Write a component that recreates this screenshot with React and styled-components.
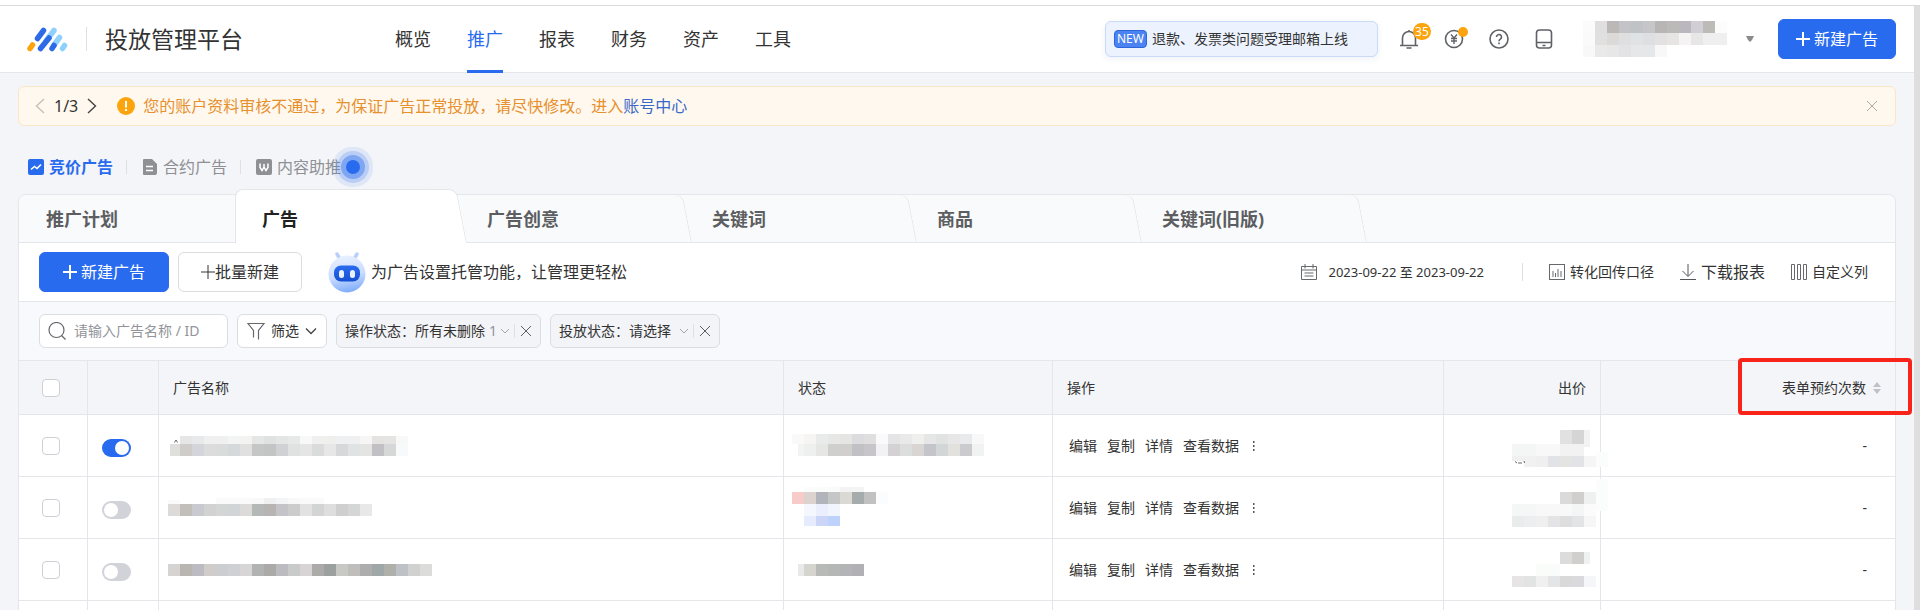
import React, { useState } from "react";
import styled, { createGlobalStyle, css } from "styled-components";

const NAV = ["概览", "推广", "报表", "财务", "资产", "工具"];

const TABS = ["推广计划", "广告", "广告创意", "关键词", "商品", "关键词(旧版)"];

const ACTIONS = ["编辑", "复制", "详情", "查看数据"];

// every strip is a run of 12px cells, "first" is the width of the leading cell when it is cut
const ACCOUNT = [
  { x: 12, y: 0, colors: "#fbfbfb #dfdfe0 #bbb8b7 #c4c3c7 #c0c3c6 #c6c5c7 #b8b5b5 #bcb9b9 #bab8be #d1cfd5 #bdbbb8 #fcfcfd" },
  { x: 12, y: 12, colors: "#fafafa #e0e0e0 #dbdad8 #dfdfdf #e0e3e5 #dddfe1 #e3e1e2 #e7e4e4 #f6f3f5 #e7e7e6 #efefef #efefef" },
  { x: 12, y: 24, colors: "#f8f8f8 #e9e9e9 #e7e7e8 #e3e3e5 #e5e7e9 #e6e7e8 #f8f8f9" },
];

const ROWS = [
  {
    id: 1,
    on: true,
    name: [
      { x: 12, y: 21, h: 8, colors: "#e6e6e6 #e8e9ea #f0f0f0 #f0f0f0 #f3f4f4 #f3f4f2 #e4e7e6 #dfe2e1 #e4e6e6 #e6e9e8 #f8f8f8 #f0f0ee #efefee #eef0f2 #f0f0f0 #f6f6f6 #e4e3e1 #e5e4e2 #f7f8f8" },
      { x: 2, y: 29, first: 10, colors: "#dfdfdd #cfccca #d3d5da #dcdcdc #dadcdb #d6d9db #e0e0e1 #c5c7c6 #c3c5c5 #cfd1d5 #dfe2e1 #e6e5e6 #dadcdb #e7e7e7 #d7d8da #dfe3e4 #e4e4e2 #c1c1c5 #d6d8d7 #f8f9fa" },
    ],
    nameMark: "M6.500 27.500L8 25L9.500 27.500",
    status: [
      { x: 0, y: 19, h: 10, colors: "#f9f9f9 #f6f5f4 #e8ebea #e7e7e7 #e5e5e3 #dcdcdf #dfdfe0 #fafafa #e4e4e7 #e9e9e9 #efefee #e6e6e7 #e0e3e2 #e7e7e7 #e9eaec #f8f8f8" },
      { x: 6, y: 29, first: 6, colors: "#f2f4f3 #eeefef #e6e6e4 #cfcfcd #d0cfce #c1c0c4 #c7c5ca #f2f2f4 #d3d1d3 #dcdedd #d8d5d2 #c4c5ca #d2d6d6 #e2e1de #cbcbcf #f0f3f2" },
    ],
    price: [
      { x: 48, y: 15, h: 17, colors: "#e1e1e1 #d5d5d5" },
      { x: 72, y: 15, h: 17, first: 6, colors: "#f2f2f2" },
      { x: 0, y: 29, colors: "#f4f5f5 #f4f5f5 #f8f8f8 #f8f8f8 #f2f2f2 #f2f2f2" },
      { x: 0, y: 41, h: 5, colors: "#f0f0f0" },
      { x: 12, y: 41, h: 11, colors: "#f1f1f2 #efefef #e2e3e6 #e4e4e3 #e2e3e6 #f5f5f6" },
      { x: 84, y: 37, h: 15, colors: "#fbfcfc" },
    ],
    priceMark: "M3 46.500L5 48M6 48H10M12 46L12.500 48",
  },
  {
    id: 2,
    on: false,
    name: [
      { x: 0, y: 23, h: 5, colors: "#fafafa" },
      { x: 48, y: 21, h: 6, colors: "#fafafa #fafafa #fafafa #f8f8f8 #f0f0f0 #f3f4f5 #f8f8f8 #fafafa #fafafa" },
      { x: 0, y: 27, colors: "#dcdbda #c2bfbb #c9cad0 #d3d2d3 #d3d6d5 #d2d5d8 #dddbd9 #b4b8b6 #b7b4b3 #c3c3c8 #cccccd #e2e2e2 #d2d5d4 #dedede #cfcfcf #d5d7d6 #e8e8e8" },
    ],
    status: [
      { x: 12, y: 10, h: 5, colors: "#fcfcfc #fafbfb #f9fafa #f3f3f3 #f3f4f3" },
      { x: 0, y: 15, colors: "#f7cbc8 #dcd3cf #b1b5bb #c4c7c6 #dad9d3 #a6abac #c1c1c1 #fbfcfe" },
      { x: 12, y: 27, colors: "#f5f7fe #ebeffd #f1f5fe" },
      { x: 12, y: 39, h: 10, colors: "#e6ebfd #cbd5f8 #bdd3fc" },
    ],
    price: [
      { x: 48, y: 15, colors: "#dadadb #d1cfce #eff1f0" },
      { x: 0, y: 27, colors: "#f5f6f6 #f5f6f6 #f8f8f8 #f8f8f8 #f8f8f8 #f4f5f5 #fbfbfb" },
      { x: 0, y: 39, h: 11, colors: "#eaebeb #eceef0 #efeff0 #e4e4e7 #dededf #e3e4e6 #f6f6f6" },
      { x: 84, y: 2, h: 32, colors: "#fbfdfd" },
    ],
  },
  {
    id: 3,
    on: false,
    name: [
      { x: 0, y: 25, colors: "#d5d4d2 #b9b6b2 #bbbbc1 #cfccca #cccdd0 #cfd0d3 #d8d5d7 #b0b3b1 #abaaa8 #bbbbc0 #c9caca #d8d3d5 #adabaa #9ca09f #c8c9c4 #bfbebc #adadae #9fa7a9 #afb0aa #bec2c7 #d1d1d1 #dcdcda" },
    ],
    status: [
      { x: 6, y: 25, first: 6, colors: "#e8e9e9 #d6d4ce #b8bab8 #b5b7b6 #b2b4b5 #b1b0b5" },
    ],
    price: [
      { x: 48, y: 13, colors: "#dcdcdd #d1cfcd" },
      { x: 72, y: 13, first: 6, colors: "#f0f2f1" },
      { x: 24, y: 25, colors: "#fafcfa #fafcfb" },
      { x: 0, y: 37, h: 11, colors: "#e6e4e4 #e2e4e3 #f0f0f1 #e3e5e6 #d9d9da #dadade #f5f6f9" },
    ],
  },
];

const Mosaic = ({ strips, width, height, mark }) => (
  <MosaicSvg width={width} height={height} aria-hidden="true">
    {strips.map(({ x, y, h = 12, first = 12, colors }) =>
      colors.split(" ").map((fill, i) => (
        <rect
          key={`${x}-${y}-${i}`}
          x={i === 0 ? x : x + first + (i - 1) * 12}
          y={y}
          width={i === 0 ? first : 12}
          height={h}
          fill={fill}
        />
      ))
    )}
    {mark && <path d={mark} fill="none" stroke="#666" />}
  </MosaicSvg>
);

const Icon = ({ size = 16, box = "0 0 16 16", stroke = "currentColor", weight = 1, children }) => (
  <svg width={size} height={size} viewBox={box} fill="none" stroke={stroke} strokeWidth={weight} aria-hidden="true">
    {children}
  </svg>
);

const Logo = () => (
  <svg width="42" height="25" viewBox="0 0 42 25" strokeWidth="5.500" strokeLinecap="round" aria-hidden="true">
    <path d="M28 3.500L20 14M33.500 10.500L28 18" stroke="#8fd0fd" />
    <path d="M17.500 3.500L11.500 11.500M23 11L14.500 21.500M28 18.500L26 21.500" stroke="#2d6ae8" />
    <path d="M38.500 18.500L36.500 21.500" stroke="#8fd0fd" />
    <path d="M6.500 18L4 21.500" stroke="#fca40d" />
  </svg>
);

const PlusIcon = ({ size = 14, weight = 2 }) => (
  <Icon size={size} box="0 0 14 14" weight={weight}>
    <path d="M7 0V14M0 7H14" />
  </Icon>
);

const Robot = () => (
  <svg width="38" height="42" viewBox="0 0 38 42" aria-hidden="true">
    <defs>
      <linearGradient id="head" x1="0.3" y1="0" x2="0.5" y2="1">
        <stop offset="0" stopColor="#eaf1ff" />
        <stop offset="0.55" stopColor="#cbdcff" />
        <stop offset="1" stopColor="#80adfc" />
      </linearGradient>
      <linearGradient id="face" x1="0" y1="0" x2="0" y2="1">
        <stop offset="0" stopColor="#2a6bf0" />
        <stop offset="1" stopColor="#1550d2" />
      </linearGradient>
    </defs>
    <path d="M9 3L12 8M29 3L26 8" stroke="#b9cffb" strokeWidth="3.500" strokeLinecap="round" />
    <circle cx="19" cy="23" r="18.500" fill="url(#head)" />
    <rect x="6" y="14.500" width="26" height="16" rx="7" fill="url(#face)" />
    <rect x="11" y="19" width="5" height="8" rx="2.500" fill="#e6f3ff" />
    <rect x="22" y="19" width="5" height="8" rx="2.500" fill="#e6f3ff" />
  </svg>
);

const ChipFilter = ({ id, label, value, count }) => (
  <Chip>
    <label htmlFor={id}>{label}：</label>
    <ChipSelect id={id}>
      <option>{value}</option>
    </ChipSelect>
    {count && <ChipCount>{count}</ChipCount>}
    <ChipArrow $gap={count ? 3 : 8}>
      <Icon size={10} box="0 0 10 10" stroke="#a4a6ab">
        <path d="M1 3L5 7L9 3" />
      </Icon>
    </ChipArrow>
    <Divider $h={14} />
    <PlainButton aria-label={`${label} ×`}>
      <Icon size={12} box="0 0 12 12" stroke="#5c5e63">
        <path d="M1 1L11 11M11 1L1 11" />
      </Icon>
    </PlainButton>
  </Chip>
);

const AdRow = ({ row }) => {
  const [checked, setChecked] = useState(false);
  const [on, setOn] = useState(row.on);

  return (
    <tr>
      <Td $center>
        <Checkbox aria-label="广告" checked={checked} onChange={() => setChecked(!checked)} />
      </Td>
      <Td $switch>
        <Switch aria-label="广告" checked={on} onChange={() => setOn(!on)} />
      </Td>
      <MosaicTd $indent={9}>
        <Mosaic strips={row.name} width={270} height={61} mark={row.nameMark} />
      </MosaicTd>
      <MosaicTd $indent={8}>
        <Mosaic strips={row.status} width={200} height={61} />
      </MosaicTd>
      <Td>
        <Actions>
          {ACTIONS.map((action) => (
            <TextLink href="#" key={action}>
              {action}
            </TextLink>
          ))}
          <PlainButton aria-label="⋮">
            <svg width="8" height="12" viewBox="0 0 8 12" fill="#55575b" aria-hidden="true">
              <path d="M4 1h1.500v2H4zM4 5h1.500v2H4zM4 9h1.500v2H4z" />
            </svg>
          </PlainButton>
        </Actions>
      </Td>
      <MosaicTd $indent={68}>
        <Mosaic strips={row.price} width={96} height={61} mark={row.priceMark} />
      </MosaicTd>
      <Td $num>-</Td>
    </tr>
  );
};

const App = () => {
  const [nav, setNav] = useState("推广");
  const [tab, setTab] = useState("广告");

  return (
    <Page>
      <GlobalStyle />
      <TopLine />
      <Frame>
        <Main>
          <Header>
            <Brand>
              <Logo />
              <Divider $h={24} />
              <h1>投放管理平台</h1>
            </Brand>
            <Nav>
              {NAV.map((item) => (
                <NavLink href="#" key={item} $active={item === nav} onClick={() => setNav(item)}>
                  {item}
                </NavLink>
              ))}
            </Nav>
            <NewsPill href="#">
              <NewTag>NEW</NewTag>
              退款、发票类问题受理邮箱上线
            </NewsPill>
            <HeaderIcons>
              <IconButton aria-label="35">
                <Icon size={20} box="0 0 20 20" stroke="#606266" weight={1.6}>
                  <path d="M1 16.500H19M3.500 16.500V9a6.500 6.500 0 0 1 13 0V16.500M10 2.500V1M7.500 19H12.500" />
                </Icon>
                <Count>35</Count>
              </IconButton>
              <IconButton aria-label="¥">
                <Icon size={20} box="0 0 20 20" stroke="#606266" weight={1.6}>
                  <circle cx="10" cy="10" r="8.500" />
                  <path d="M7 5.500L10 9L13 5.500M10 9V15M7 9.500H13M7 12H13" strokeWidth="1.400" />
                </Icon>
                <Dot />
              </IconButton>
              <IconButton aria-label="?">
                <Icon size={20} box="0 0 20 20" stroke="#606266" weight={1.6}>
                  <circle cx="10" cy="10" r="9" />
                  <path d="M7.500 8a2.500 2.500 0 1 1 3.800 2.100C10.300 10.700 10 11 10 12.200M10 13.500V15.200" />
                </Icon>
              </IconButton>
              <IconButton aria-label="App">
                <Icon size={20} box="0 0 20 20" stroke="#606266" weight={1.6}>
                  <rect x="2.500" y="1" width="15" height="18" rx="3" />
                  <path d="M2.500 13.500H17.500M8.500 16.500H11.500" />
                </Icon>
              </IconButton>
            </HeaderIcons>
            <Account>
              <Mosaic strips={ACCOUNT} width={156} height={36} />
              <svg width="8" height="6" viewBox="0 0 8 6" fill="#8b8b8b" aria-hidden="true">
                <path d="M0 0H8L6 4L4 6L2 4Z" />
              </svg>
            </Account>
            <Button $primary $pad={17}>
              <PlusIcon />
              新建广告
            </Button>
          </Header>

          <Alert>
            <PlainButton aria-label="‹">
              <Icon size={16} stroke="#c3c1bd" weight={1.4}>
                <path d="M12 1L4.500 8L12 15" />
              </Icon>
            </PlainButton>
            <Pager>1/3</Pager>
            <PlainButton aria-label="›">
              <Icon size={16} stroke="#444" weight={1.4}>
                <path d="M4 1L11.500 8L4 15" />
              </Icon>
            </PlainButton>
            <AlertIcon width="18" height="18" viewBox="0 0 18 18" aria-hidden="true">
              <circle cx="9" cy="9" r="9" fill="#fca40d" />
              <path d="M9 4V10.500M9 12V14" stroke="#fff" strokeWidth="2" />
            </AlertIcon>
            <p>
              您的账户资料审核不通过，为保证广告正常投放，请尽快修改。进入<a href="#">账号中心</a>
            </p>
            <PlainButton aria-label="×">
              <Icon size={10} box="0 0 10 10" stroke="#aaa9a4">
                <path d="M0 0L10 10M10 0L0 10" />
              </Icon>
            </PlainButton>
          </Alert>

          <SubNav>
            <SubLink href="#" $active>
              <Icon>
                <rect width="16" height="16" rx="2" fill="currentColor" stroke="none" />
                <path d="M3 10.500L6.500 7.500L9 9.500L13 5.500" stroke="#fff" strokeWidth="1.600" />
              </Icon>
              竞价广告
            </SubLink>
            <Divider $h={14} />
            <SubLink href="#">
              <Icon>
                <path d="M2 0H10L15 5V14a2 2 0 0 1-2 2H2a1 1 0 0 1-1-1V1a1 1 0 0 1 1-1Z" fill="#8e9094" stroke="none" />
                <path d="M4 7.500H11M4 11.500H11" stroke="#fff" strokeWidth="1.600" />
              </Icon>
              合约广告
            </SubLink>
            <Divider $h={14} />
            <SubLink href="#">
              <Icon>
                <rect width="16" height="16" rx="2" fill="#8e9094" stroke="none" />
                <path d="M4 4.500V8.500L6 11.500L8 8V5V8L10 11.500L12 8.500V4.500" stroke="#fff" strokeWidth="1.500" />
              </Icon>
              内容助推
              <Pulse />
            </SubLink>
          </SubNav>

          <Panel>
            <Tabs role="tablist">
              {TABS.map((item, i) => (
                <Tab
                  key={item}
                  role="tab"
                  aria-selected={item === tab}
                  $first={i === 0}
                  $active={item === tab}
                  $plain={TABS[i + 1] === tab}
                  onClick={() => setTab(item)}
                >
                  {item}
                </Tab>
              ))}
            </Tabs>

            <Toolbar>
              <Button $primary $pad={23}>
                <PlusIcon />
                新建广告
              </Button>
              <Button $pad={22}>
                <PlusIcon weight={1} />
                批量新建
              </Button>
              <Hosting href="#">
                <Robot />
                为广告设置托管功能，让管理更轻松
              </Hosting>
              <Tools>
                <ToolButton $date>
                  <Icon stroke="#66686c">
                    <path d="M0.500 2.500H15.500V15.500H0.500ZM0.500 6H15.500M4 0V4.500M12 0V4.500M3.500 9H12.500M3.500 12H12.500" />
                  </Icon>
                  2023-09-22 至 2023-09-22
                </ToolButton>
                <Divider $h={18} />
                <ToolButton>
                  <Icon stroke="#66686c">
                    <rect x="0.500" y="0.500" width="15" height="15" />
                    <path d="M4 7V13M6.500 9V13M9 5V13M12 7V13" />
                  </Icon>
                  转化回传口径
                </ToolButton>
                <ToolButton $large>
                  <Icon stroke="#55575b">
                    <path d="M8 0V12M2.500 7L8 12.500L13.500 7M0 15.500H16" />
                  </Icon>
                  下载报表
                </ToolButton>
                <ToolButton>
                  <Icon stroke="#66686c">
                    <path d="M0.500 0.500H3.500V15.500H0.500ZM6.500 0.500H9.500V15.500H6.500ZM12.500 0.500H15.500V15.500H12.500Z" />
                  </Icon>
                  自定义列
                </ToolButton>
              </Tools>
            </Toolbar>

            <Filters>
              <Search>
                <Icon size={18} box="0 0 18 18" stroke="#66686c" weight={1.2}>
                  <circle cx="8.500" cy="8" r="7.500" />
                  <path d="M13.500 13.500L17.500 17.500" />
                </Icon>
                <input aria-label="请输入广告名称 / ID" placeholder="请输入广告名称 / ID" />
              </Search>
              <FilterButton>
                <Icon size={18} box="0 0 18 18" stroke="#66686c" weight={1.2}>
                  <path d="M6.500 15.500V8.500L1 1.500H17L11.500 8.500V17.500" />
                </Icon>
                筛选
                <Icon size={12} box="0 0 12 12" stroke="#444" weight={1.3}>
                  <path d="M1 3.500L6 8.500L11 3.500" />
                </Icon>
              </FilterButton>
              <ChipFilter id="op-status" label="操作状态" value="所有未删除" count="1" />
              <ChipFilter id="serve-status" label="投放状态" value="请选择" />
            </Filters>

            <Table>
              <colgroup>
                <Col $w={69} />
                <Col $w={71} />
                <Col />
                <Col $w={269} />
                <Col $w={391} />
                <Col $w={157} />
                <Col $w={294} />
              </colgroup>
              <thead>
                <tr>
                  <Th $center>
                    <Checkbox aria-label="广告名称" />
                  </Th>
                  <Th />
                  <Th>广告名称</Th>
                  <Th>状态</Th>
                  <Th>操作</Th>
                  <Th $right>出价</Th>
                  <Th $right>
                    <SortButton>
                      表单预约次数
                      <svg width="8" height="12" viewBox="0 0 8 12" fill="#bfc1c6" aria-hidden="true">
                        <path d="M4 0L8 5H0ZM0 7H8L4 12Z" />
                      </svg>
                    </SortButton>
                    <Highlight />
                  </Th>
                </tr>
              </thead>
              <tbody>
                {ROWS.map((row) => (
                  <AdRow row={row} key={row.id} />
                ))}
                <tr>
                  <Td />
                  <Td />
                  <Td />
                  <Td />
                  <Td />
                  <Td />
                  <Td />
                </tr>
              </tbody>
            </Table>
          </Panel>
        </Main>
        <ScrollTrack />
      </Frame>
    </Page>
  );
};

const BLUE = "#296bef";
const LINE = "#e5e6ea";

const GlobalStyle = createGlobalStyle`
  * {
    box-sizing: border-box;
  }

  body {
    margin: 0;
    background: #f4f5f8;
  }

  body, button, input, select {
    font-family: "Noto Sans", "Noto Sans CJK SC", sans-serif;
    font-size: 14px;
    line-height: 20px;
    color: #333;
  }

  a {
    color: inherit;
    text-decoration: none;
  }

  button {
    cursor: pointer;
  }

  svg {
    flex: none;
  }
`;

const Page = styled.div`
  display: flex;
  flex-direction: column;
  height: 100vh;
  overflow: hidden;
`;

const TopLine = styled.div`
  flex: none;
  height: 6px;
  background: #fff;
  border-bottom: 1px solid #d9d9d9;
`;

const Frame = styled.div`
  display: flex;
  flex: 1;
  min-height: 0;
`;

const Main = styled.main`
  flex: 1;
  min-width: 0;
`;

const ScrollTrack = styled.div`
  width: 6px;
  background: #dedede;
`;

const Divider = styled.span`
  flex: none;
  width: 1px;
  height: ${({ $h }) => $h}px;
  background: #dfe0e3;
`;

const PlainButton = styled.button`
  display: flex;
  padding: 0;
  border: 0;
  background: none;
`;

/* header */

const Header = styled.header`
  display: flex;
  align-items: center;
  height: 67px;
  padding: 0 18px 0 26px;
  background: #fff;
  border-bottom: 1px solid ${LINE};
`;

const Brand = styled.div`
  display: flex;
  align-items: center;
  gap: 18px;

  h1 {
    margin: 0;
    font-size: 23px;
    line-height: 32px;
    font-weight: 400;
  }
`;

const Nav = styled.nav`
  display: flex;
  gap: 36px;
  height: 100%;
  margin-left: 152px;
`;

const NavLink = styled.a`
  display: flex;
  align-items: center;
  height: 67px;
  border-bottom: 3px solid transparent;
  padding-top: 2px;
  font-size: 18px;

  ${({ $active }) =>
    $active &&
    css`
      color: ${BLUE};
      border-color: ${BLUE};
    `}
`;

const NewsPill = styled.a`
  display: flex;
  align-items: center;
  gap: 5px;
  height: 36px;
  width: 273px;
  margin-left: auto;
  padding-left: 8px;
  border: 1px solid #c9d9f8;
  border-radius: 6px;
  background: #edf3fe;
  box-shadow: 0 2px 6px rgba(40, 80, 160, 0.08);
`;

const NewTag = styled.span`
  padding: 0 2px;
  border: 1px solid #2c66d8;
  border-radius: 4px;
  background: #4b84f2;
  color: #fff;
  font-size: 12px;
  line-height: 16px;
`;

const HeaderIcons = styled.div`
  display: flex;
  gap: 25px;
  margin-left: 21px;
`;

const IconButton = styled(PlainButton)`
  position: relative;
`;

const Count = styled.span`
  position: absolute;
  left: 14px;
  top: -6px;
  width: 18px;
  border-radius: 9px;
  background: #fca40d;
  color: #fff;
  font-size: 12px;
  line-height: 17px;
`;

const Dot = styled.span`
  position: absolute;
  right: -4px;
  top: -2px;
  width: 10px;
  height: 10px;
  border-radius: 50%;
  background: #fca40d;
`;

const Account = styled(PlainButton)`
  align-items: center;
  gap: 19px;
  margin: 0 24px 0 17px;
`;

const Button = styled.button`
  display: flex;
  align-items: center;
  justify-content: center;
  gap: ${({ $primary }) => ($primary ? 4 : 0)}px;
  height: 40px;
  padding: 0 ${({ $pad }) => $pad}px;
  border: 1px solid ${({ $primary }) => ($primary ? BLUE : "#dcdde1")};
  border-radius: 6px;
  background: ${({ $primary }) => ($primary ? BLUE : "#fff")};
  color: ${({ $primary }) => ($primary ? "#fff" : "#333")};
  font-size: 16px;
  white-space: nowrap;
`;

/* alert */

const Alert = styled.section`
  display: flex;
  align-items: center;
  height: 40px;
  margin: 13px 18px 0;
  padding: 0 18px 0 13px;
  border: 1px solid #fae6c4;
  border-radius: 6px;
  background: #fff8ee;

  p {
    flex: 1;
    margin: 0;
    font-size: 16px;
    color: #e6902e;
  }

  a {
    color: #3a68c8;
  }
`;

const Pager = styled.span`
  padding: 0 6px;
  font-size: 16px;
`;

const AlertIcon = styled.svg`
  margin: 0 8px 0 17px;
`;

/* sub navigation */

const SubNav = styled.nav`
  display: flex;
  align-items: center;
  gap: 13px;
  height: 68px;
  padding: 14px 28px 0;

  ${Divider} {
    margin-right: 2px;
  }
`;

const SubLink = styled.a`
  position: relative;
  display: flex;
  align-items: center;
  gap: 5px;
  font-size: 16px;
  color: ${({ $active }) => ($active ? BLUE : "#8e9094")};
  font-weight: ${({ $active }) => ($active ? 700 : 400)};
`;

const Pulse = styled.span`
  position: absolute;
  left: 90px;
  top: 3px;
  width: 14px;
  height: 14px;
  border-radius: 50%;
  background: ${BLUE};
  box-shadow:
    0 0 0 5px rgba(41, 107, 239, 0.4),
    0 0 0 9px rgba(41, 107, 239, 0.2),
    0 0 0 13px rgba(41, 107, 239, 0.1);
`;

/* panel */

const Panel = styled.section`
  margin: 0 18px;
  border: 1px solid ${LINE};
  border-radius: 8px 8px 0 0;
  background: #fff;
`;

const Tabs = styled.div`
  display: flex;
  height: 48px;
  border-bottom: 1px solid ${LINE};
  border-radius: 8px 8px 0 0;
  background: #f9fafc;
`;

const Tab = styled.button`
  position: relative;
  width: ${({ $first }) => ($first ? 216 : 225)}px;
  height: 47px;
  padding: 0 27px;
  border: 0;
  background: none;
  color: #5c5e61;
  font-size: 18px;
  font-weight: 700;
  text-align: left;

  &::after {
    content: "";
    display: ${({ $plain }) => ($plain ? "none" : "block")};
    position: absolute;
    right: -7px;
    top: 0;
    bottom: 0;
    width: 30px;
    border-right: 1px solid ${LINE};
    border-top-right-radius: 8px;
    transform: skewX(11deg);
    transform-origin: bottom;
  }

  ${({ $active }) =>
    $active &&
    css`
      z-index: 1;
      height: 54px;
      margin-top: -6px;
      padding-top: 6px;
      color: #222;

      &::before {
        content: "";
        position: absolute;
        z-index: -1;
        inset: 0 14px 0 0;
        border: 1px solid ${LINE};
        border-width: 1px 0 0 1px;
        border-radius: 8px 0 0 0;
        background: #fff;
      }

      &::after {
        z-index: -1;
        border-top: 1px solid ${LINE};
        background: #fff;
      }
    `}
`;

const Toolbar = styled.div`
  display: flex;
  align-items: center;
  gap: 9px;
  height: 59px;
  padding: 0 27px 0 20px;
  border-bottom: 1px solid ${LINE};
`;

const Hosting = styled.a`
  display: flex;
  align-items: center;
  gap: 5px;
  margin-left: 17px;
  font-size: 16px;
`;

const Tools = styled.div`
  display: flex;
  align-items: center;
  gap: 26px;
  margin-left: auto;
`;

const ToolButton = styled(PlainButton)`
  align-items: center;
  gap: ${({ $date }) => ($date ? 12 : 5)}px;
  margin-right: ${({ $date }) => ($date ? 12 : 0)}px;
  font-size: ${({ $large, $date }) => ($large ? 16 : $date ? 13 : 14)}px;
`;

const Filters = styled.div`
  display: flex;
  align-items: center;
  gap: 9px;
  height: 59px;
  padding: 0 20px;
  border-bottom: 1px solid ${LINE};
  background: #f8f9fd;
`;

const Search = styled.div`
  display: flex;
  align-items: center;
  gap: 8px;
  width: 189px;
  height: 34px;
  padding: 0 8px;
  border: 1px solid #dcdde1;
  border-radius: 6px;
  background: #fff;

  input {
    flex: 1;
    min-width: 0;
    padding: 0;
    border: 0;
    outline: 0;
    background: none;
  }

  input::placeholder {
    color: #929499;
    opacity: 1;
  }
`;

const FilterButton = styled.button`
  display: flex;
  align-items: center;
  justify-content: space-between;
  width: 90px;
  height: 34px;
  padding: 0 9px;
  border: 1px solid #dcdde1;
  border-radius: 6px;
  background: #fff;
`;

const Chip = styled.div`
  display: flex;
  align-items: center;
  height: 34px;
  padding: 0 8px;
  border: 1px solid #dcdde1;
  border-radius: 6px;
  background: #f3f4f7;

  ${PlainButton} {
    margin-left: 5px;
  }
`;

const ChipSelect = styled.select`
  appearance: none;
  padding: 0;
  border: 0;
  background: none;
`;

const ChipCount = styled.span`
  margin-left: 4px;
  color: #929499;
`;

const ChipArrow = styled.span`
  display: flex;
  margin: 0 4px 0 ${({ $gap }) => $gap}px;
`;

/* table */

const Table = styled.table`
  width: 100%;
  table-layout: fixed;
  border-collapse: separate;
  border-spacing: 0;
`;

const Col = styled.col`
  width: ${({ $w }) => ($w ? `${$w}px` : "auto")};
`;

const cell = css`
  padding: 0 14px;
  border-right: 1px solid ${LINE};
  border-bottom: 1px solid ${LINE};
  text-align: left;
  vertical-align: middle;

  &:last-child {
    border-right: 0;
  }
`;

const Th = styled.th`
  ${cell}
  position: relative;
  height: 54px;
  background: #f4f5f8;
  font-weight: 400;
  text-align: ${({ $right }) => ($right ? "right" : "left")};
  ${({ $center }) => $center && "padding: 0 0 0 23px;"}
`;

const Td = styled.td`
  ${cell}
  height: 62px;
  ${({ $center }) => $center && "padding: 0 0 0 23px;"}
  ${({ $num }) => $num && "padding-right: 28px; text-align: right;"}
  ${({ $switch }) => $switch && "padding: 4px 0 0 14px;"}
`;

const MosaicTd = styled.td`
  ${cell}
  padding: 0 0 0 ${({ $indent }) => $indent}px;
`;

const MosaicSvg = styled.svg`
  display: block;
  position: relative;
`;

const Checkbox = styled.input.attrs({ type: "checkbox" })`
  appearance: none;
  display: block;
  width: 18px;
  height: 18px;
  margin: 0;
  border: 1px solid #cfd0d6;
  border-radius: 4px;
  background: #fff;

  &:checked {
    border-color: ${BLUE};
    background: ${BLUE};
  }
`;

const Switch = styled.input.attrs({ type: "checkbox", role: "switch" })`
  appearance: none;
  display: block;
  width: 29px;
  height: 18px;
  margin: 0;
  padding: 2px;
  border-radius: 9px;
  background: #d2d3d9;

  &::before {
    content: "";
    display: block;
    width: 14px;
    height: 14px;
    border-radius: 50%;
    background: #fff;
  }

  &:checked {
    background: ${BLUE};
  }

  &:checked::before {
    margin-left: 11px;
  }
`;

const Actions = styled.div`
  display: flex;
  align-items: center;
  gap: 10px;
  padding-left: 2px;
`;

const TextLink = styled.a`
  white-space: nowrap;
`;

const SortButton = styled.button`
  display: inline-flex;
  align-items: center;
  gap: 7px;
  padding: 0;
  border: 0;
  background: none;
  vertical-align: middle;
`;

const Highlight = styled.span`
  position: absolute;
  inset: -3px -17px -1px auto;
  width: 174px;
  border: 4px solid #f8241a;
  border-radius: 4px;
  pointer-events: none;
`;

export default App;
